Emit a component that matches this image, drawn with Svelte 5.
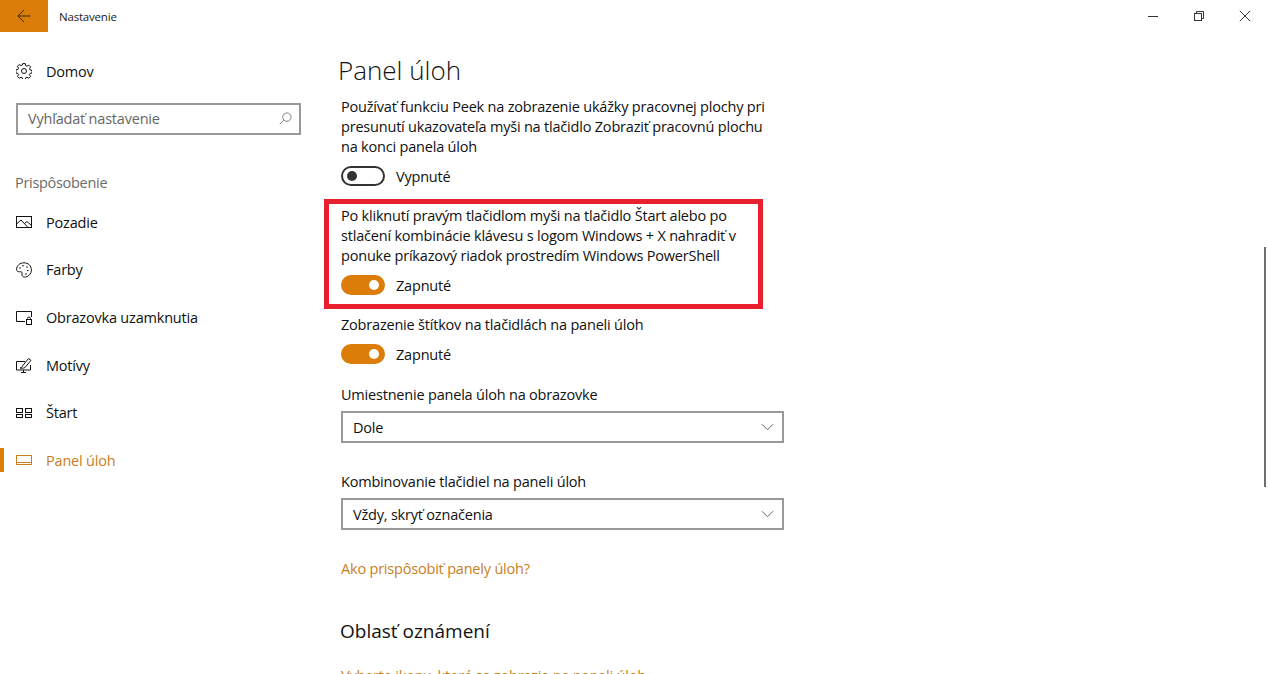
<script lang="ts">
  const navItems = [
    { label: "Pozadie", icon: "picture" },
    { label: "Farby", icon: "palette" },
    { label: "Obrazovka uzamknutia", icon: "lock" },
    { label: "Motívy", icon: "theme" },
    { label: "Štart", icon: "start" },
    { label: "Panel úloh", icon: "taskbar", active: true },
  ];
</script>

{#snippet navIcon(name: string)}
  <svg class="icon" viewBox="0 0 16 16" fill="none" stroke="currentColor" stroke-width="1">
    {#if name === "picture"}
      <rect x="0.5" y="2.5" width="15" height="11" />
      <path d="M0.5 10 L5 6 L12 13.5 M8.5 9.5 L11 7.5 L15.5 11.5" />
    {:else if name === "palette"}
      <path d="M8 .8C3.8.8.6 3.6.6 7.4c0 1.6 1 2.4 2.2 2.4 1.3 0 2.3-.4 3 .4.9 1-.5 2.3.4 3.6.7 1 2 1.5 3.3 1.3 3.3-.6 5.9-3.5 5.9-7 0-4.2-3-7.3-7.4-7.3Z" />
      <circle cx="4" cy="6" r=".8" fill="currentColor" stroke="none" />
      <circle cx="7" cy="3.8" r=".8" fill="currentColor" stroke="none" />
      <circle cx="11" cy="5" r=".8" fill="currentColor" stroke="none" />
      <circle cx="11.8" cy="8.5" r=".8" fill="currentColor" stroke="none" />
      <circle cx="10" cy="12" r=".8" fill="currentColor" stroke="none" />
    {:else if name === "lock"}
      <path d="M9 12.5H.5v-10h15V8" />
      <rect x="10.5" y="10.5" width="5" height="5" />
      <path d="M11.5 10.5V9.5a1.5 1.5 0 0 1 3 0v1" />
    {:else if name === "theme"}
      <path d="M9 4.5H.5V13h14V8" />
      <path d="M5 15.5h5M7.5 13v2.5" />
      <path d="M4 11c1.5 0 2-1 2.5-2l6-7.5 2.5 1.8-6 7.2c-1.5.8-3.3 1-5 .5Z" />
    {:else if name === "start"}
      <rect x="0.5" y="3.5" width="6" height="4" />
      <rect x="9.5" y="3.5" width="6" height="4" />
      <rect x="0.5" y="9.5" width="6" height="3" />
      <rect x="9.5" y="9.5" width="6" height="3" />
    {:else}
      <rect x="0.5" y="3.5" width="15" height="9" />
      <path d="M0.5 10.5h15" />
    {/if}
  </svg>
{/snippet}

{#snippet chevron()}
  <svg class="chevron" viewBox="0 0 14 8" fill="none" stroke="currentColor" stroke-width="1">
    <path d="M1 1l6 6 6-6" />
  </svg>
{/snippet}

<div class="window">
  <header class="titlebar">
    <button class="back" aria-label="Späť">
      <svg viewBox="0 0 14 14" fill="none" stroke="currentColor" stroke-width="1">
        <path d="M13.5 7H1M7 1L1 7l6 6" />
      </svg>
    </button>
    <span class="app-title">Nastavenie</span>
    <div class="controls">
      <svg viewBox="0 0 12 12" fill="none" stroke="currentColor" stroke-width="1"><path d="M1 6.5h10" /></svg>
      <svg viewBox="0 0 12 12" fill="none" stroke="currentColor" stroke-width="1">
        <rect x="1.5" y="3.5" width="7" height="7" />
        <path d="M3.5 3.5v-2h7v7h-2" />
      </svg>
      <svg viewBox="0 0 12 12" fill="none" stroke="currentColor" stroke-width="1"><path d="M.8.8l10.4 10.4M11.2.8L.8 11.2" /></svg>
    </div>
  </header>

  <div class="body">
    <aside class="sidebar">
      <div class="home">
        <svg class="icon" viewBox="0 0 16 16" fill="none" stroke="currentColor" stroke-width="1">
          <path d="M6.7.6h2.6l.4 2 1.3.6 1.8-1.1 1.8 1.8-1.1 1.8.6 1.3 2 .4v2.6l-2 .4-.6 1.3 1.1 1.8-1.8 1.8-1.8-1.1-1.3.6-.4 2H6.7l-.4-2-1.3-.6-1.800 1.100-1.800-1.800 1.100-1.800-.6-1.300-2-.4V6.800l2-.4.6-1.300-1.100-1.800 1.800-1.800 1.800 1.100 1.300-.6Z" />
          <circle cx="8" cy="8" r="2.5" />
        </svg>
        <span>Domov</span>
      </div>

      <div class="search">
        <span>Vyhľadať nastavenie</span>
        <svg viewBox="0 0 14 14" fill="none" stroke="currentColor" stroke-width="1">
          <circle cx="8.5" cy="5.5" r="4.5" />
          <path d="M5.2 8.8L.8 13.2" />
        </svg>
      </div>

      <div class="section">Prispôsobenie</div>

      <nav>
        {#each navItems as item}
          <div class="nav-item" class:active={item.active}>
            {@render navIcon(item.icon)}
            <span>{item.label}</span>
          </div>
        {/each}
      </nav>
    </aside>

    <main class="content">
      <h1>Panel úloh</h1>

      <p class="text">Používať funkciu Peek na zobrazenie ukážky pracovnej plochy pri presunutí ukazovateľa myši na tlačidlo Zobraziť pracovnú plochu na konci panela úloh</p>
      <div class="toggle-row">
        <span class="toggle"></span>
        <span>Vypnuté</span>
      </div>

      <div class="highlight">
        <p class="text">Po kliknutí pravým tlačidlom myši na tlačidlo Štart alebo po stlačení kombinácie klávesu s logom Windows + X nahradiť v ponuke príkazový riadok prostredím Windows PowerShell</p>
        <div class="toggle-row">
          <span class="toggle on"></span>
          <span>Zapnuté</span>
        </div>
      </div>

      <p class="text single">Zobrazenie štítkov na tlačidlách na paneli úloh</p>
      <div class="toggle-row">
        <span class="toggle on"></span>
        <span>Zapnuté</span>
      </div>

      <p class="text field-label">Umiestnenie panela úloh na obrazovke</p>
      <div class="select">
        <span>Dole</span>
        {@render chevron()}
      </div>

      <p class="text field-label second">Kombinovanie tlačidiel na paneli úloh</p>
      <div class="select">
        <span>Vždy, skryť označenia</span>
        {@render chevron()}
      </div>

      <div class="link first">Ako prispôsobiť panely úloh?</div>

      <h2>Oblasť oznámení</h2>

      <div class="link">Vyberte ikony, ktoré sa zobrazia na paneli úloh</div>
    </main>
  </div>

  <div class="scrollbar"></div>
</div>

<style>
  :global(body) {
    margin: 0;
    background: #fff;
    overflow: hidden;
  }

  .window {
    position: relative;
    width: 1268px;
    height: 674px;
    overflow: hidden;
    background: #fff;
    color: #111;
    font-family: "Open Sans", "Noto Sans", sans-serif;
    font-size: 14.5px;
    letter-spacing: -0.2px;
  }

  .titlebar {
    display: flex;
    align-items: center;
    height: 32px;
  }

  .back {
    width: 48px;
    height: 32px;
    padding: 0;
    border: 0;
    background: #dc7d09;
    color: #3a2a10;
    display: flex;
    align-items: center;
    justify-content: center;
  }

  .back svg {
    width: 14px;
    height: 14px;
  }

  .app-title {
    margin-left: 11px;
    font-size: 11.5px;
    color: #222;
  }

  .controls {
    margin-left: auto;
    display: flex;
    align-items: center;
    gap: 34px;
    padding-right: 17px;
    color: #333;
  }

  .controls svg {
    width: 12px;
    height: 12px;
  }

  .body {
    display: flex;
  }

  .sidebar {
    width: 341px;
    flex: none;
    box-sizing: border-box;
  }

  .icon {
    width: 16px;
    height: 16px;
    flex: none;
  }

  .home {
    display: flex;
    align-items: center;
    gap: 14px;
    height: 24px;
    margin: 27px 0 0 16px;
  }

  .search {
    display: flex;
    align-items: center;
    justify-content: space-between;
    box-sizing: border-box;
    width: 285px;
    height: 32px;
    margin: 20px 0 0 16px;
    padding: 0 7px 2px 10px;
    border: 2px solid #999;
    color: #666;
  }

  .search svg {
    width: 13px;
    height: 13px;
    color: #777;
  }

  .section {
    margin: 38px 0 0 15px;
    height: 20px;
    line-height: 20px;
    color: #6b6b6b;
    letter-spacing: -0.3px;
  }

  nav {
    margin-top: 5.5px;
  }

  .nav-item {
    display: flex;
    align-items: center;
    gap: 14px;
    height: 47.6px;
    padding-left: 16px;
    position: relative;
  }

  .nav-item.active {
    color: #c9801c;
  }

  .nav-item.active::before {
    content: "";
    position: absolute;
    left: 0;
    top: 12px;
    width: 4px;
    height: 24px;
    background: #dc7d09;
  }

  .content {
    flex: 1;
  }

  h1 {
    margin: 19px 0 0 -3px;
    font-size: 26px;
    font-weight: 300;
    line-height: 38px;
    letter-spacing: 0;
  }

  h2 {
    margin: 38px 0 0 -1px;
    font-size: 19px;
    font-weight: 400;
    line-height: 28px;
    letter-spacing: 0;
  }

  .text {
    margin: 0;
    width: 440px;
    line-height: 20px;
  }

  h1 + .text {
    margin-top: 8px;
  }

  .text.single {
    margin-top: 6px;
  }

  .toggle-row {
    display: flex;
    align-items: center;
    gap: 11px;
    height: 20px;
    margin-top: 9px;
  }

  .toggle {
    position: relative;
    box-sizing: border-box;
    width: 44px;
    height: 20px;
    border: 2px solid #333;
    border-radius: 10px;
  }

  .toggle::after {
    content: "";
    position: absolute;
    left: 4px;
    top: 3px;
    width: 10px;
    height: 10px;
    border-radius: 50%;
    background: #333;
  }

  .toggle.on {
    background: #dc7d09;
    border-color: #dc7d09;
  }

  .toggle.on::after {
    left: auto;
    right: 4px;
    background: #fff;
  }

  .highlight {
    box-sizing: border-box;
    width: 439px;
    height: 110px;
    margin: 13px 0 6px -17px;
    padding: 2px 0 0 12px;
    border: 5px solid #e81f2c;
  }

  .highlight .text {
    width: 420px;
  }

  .field-label {
    margin-top: 21px;
  }

  .field-label.second {
    margin-top: 29px;
  }

  .select {
    display: flex;
    align-items: center;
    justify-content: space-between;
    box-sizing: border-box;
    width: 443px;
    height: 32px;
    margin-top: 6px;
    padding: 0 8px 0 10px;
    border: 2px solid #999;
  }

  .chevron {
    width: 13px;
    height: 8px;
    color: #555;
  }

  .link {
    color: #c9801c;
    line-height: 20px;
  }

  .link.first {
    margin-top: 29px;
  }

  h2 + .link {
    margin-top: 21px;
  }

  /* scrollbar thumb sits on top of the page */
  .scrollbar {
    position: absolute;
    right: 2px;
    top: 247px;
    width: 2px;
    height: 240px;
    background: #6e6e6e;
  }
</style>
